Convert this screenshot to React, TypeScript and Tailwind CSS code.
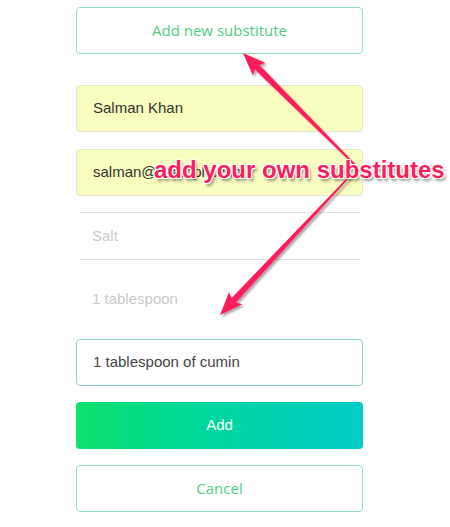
import React from "react";

type Pt = [number, number];

// tapered annotation arrow, thin at the tail, wide at the head
function arrowPoints(tail: Pt, tip: Pt) {
  const dx = tip[0] - tail[0];
  const dy = tip[1] - tail[1];
  const len = Math.hypot(dx, dy);
  const ux = dx / len;
  const uy = dy / len;
  const nx = -uy;
  const ny = ux;
  const head = 20;
  const wing = 9;
  const neck: Pt = [tip[0] - ux * head, tip[1] - uy * head];
  const back: Pt = [tip[0] - ux * (head + 3), tip[1] - uy * (head + 3)];
  const w0 = 0.8;
  const w1 = 3.2;
  const pts: Pt[] = [
    [tail[0] + nx * w0, tail[1] + ny * w0],
    [neck[0] + nx * w1, neck[1] + ny * w1],
    [back[0] + nx * wing, back[1] + ny * wing],
    tip,
    [back[0] - nx * wing, back[1] - ny * wing],
    [neck[0] - nx * w1, neck[1] - ny * w1],
    [tail[0] - nx * w0, tail[1] - ny * w0],
  ];
  return pts.map((p) => `${p[0].toFixed(1)},${p[1].toFixed(1)}`).join(" ");
}

function App() {
  return (
    <div className="relative w-[450px] h-[527px] bg-white overflow-hidden font-['Liberation_Sans',Arial,sans-serif]">
      <div className="ml-[76px] w-[287px] pt-[7px] flex flex-col">
        <button className="h-[47px] rounded border-[1.5px] border-[#93e4b9] bg-white text-[15px] text-[#52cc84] font-['Open_Sans',sans-serif]">
          Add new substitute
        </button>

        <div className="mt-[31px] h-[47px] rounded border border-[#e4e6cf] bg-[#fafdc0] flex items-center pl-[16px] text-[15px] text-[#333]">
          Salman Khan
        </div>
        <div className="mt-[17px] h-[47px] rounded border border-[#e4e6cf] bg-[#fafdc0] flex items-center pl-[16px] text-[15px] text-[#333]">
          salman@example.com
        </div>

        <div className="mt-[16px] mx-[3px] h-[48px] border-t border-b border-[#e2e2e2] flex items-center pl-[13px] text-[15px] text-[#c9c9c9]">
          Salt
        </div>
        <div className="h-[79px] flex items-center pl-[16px] text-[15px] text-[#c9c9c9]">
          1 tablespoon
        </div>

        <div className="h-[47px] rounded border border-[#8dd2cc] bg-white flex items-center pl-[16px] text-[15px] text-[#444]">
          1 tablespoon of cumin
        </div>

        <button className="mt-[16px] h-[47px] rounded bg-linear-to-r from-[#10e06c] to-[#00cbc9] text-[15px] text-white">
          Add
        </button>
        <button className="mt-[16px] h-[47px] rounded border-[1.5px] border-[#93e4b9] bg-white text-[15px] text-[#52cc84] font-['Open_Sans',sans-serif]">
          Cancel
        </button>
      </div>

      <svg className="absolute inset-0 pointer-events-none" width="450" height="527">
        <defs>
          <filter id="sh" x="-20%" y="-20%" width="140%" height="140%">
            <feDropShadow dx="2" dy="2" stdDeviation="1.2" floodColor="#000" floodOpacity="0.35" />
          </filter>
        </defs>
        <g filter="url(#sh)" fill="#ff1d5c">
          <polygon points={arrowPoints([357, 167], [243, 53])} />
          <polygon points={arrowPoints([350, 176], [220, 315])} />
        </g>
      </svg>

      <div
        className="absolute left-[154px] top-[158px] text-[24px] leading-[24px] font-bold text-[#ff1d5c] whitespace-nowrap"
        style={{
          textShadow:
            "1px 0 0 #fff, -1px 0 0 #fff, 0 1px 0 #fff, 0 -1px 0 #fff, 1px 1px 0 #fff, -1px -1px 0 #fff, 1px -1px 0 #fff, -1px 1px 0 #fff, 2px 3px 3px rgba(0,0,0,0.45)",
        }}
      >
        add your own substitutes
      </div>
    </div>
  );
}

export default App;
